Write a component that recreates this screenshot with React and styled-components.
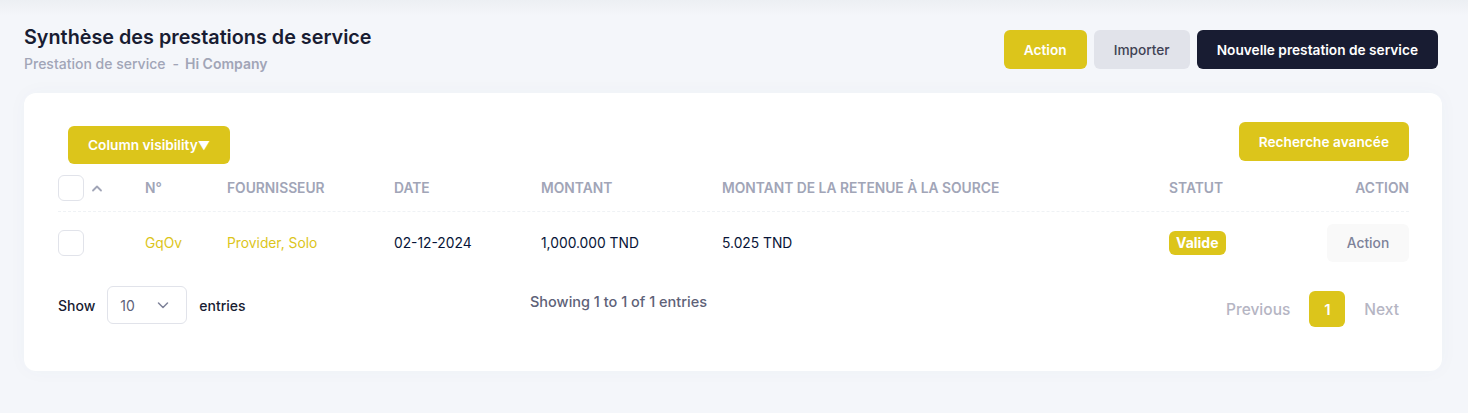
import styled, { createGlobalStyle } from "styled-components";

const yellow = "#dcc51b";

const GlobalStyle = createGlobalStyle`
    body {
        margin: 0;
        font-family: Inter, "Noto Sans", sans-serif;
        background: #f4f6fa;
        color: #181c32;
    }
`;

const columns = "87px 82px 167px 147px 181px 447px 131px 109px";

const App = () => {
    return (
        <Page>
            <GlobalStyle />
            <Header>
                <div>
                    <Title>Synthèse des prestations de service</Title>
                    <Breadcrumb>
                        Prestation de service
                        <Dash>-</Dash>
                        <strong>Hi Company</strong>
                    </Breadcrumb>
                </div>
                <HeaderActions>
                    <Button $variant="yellow">Action</Button>
                    <Button $variant="light">Importer</Button>
                    <Button $variant="dark">Nouvelle prestation de service</Button>
                </HeaderActions>
            </Header>

            <Card>
                <Toolbar>
                    <ColumnButton $variant="yellow">
                        Column visibility<Arrow>▼</Arrow>
                    </ColumnButton>
                    <Button $variant="yellow">Recherche avancée</Button>
                </Toolbar>

                <HeadRow>
                    <CheckCell>
                        <Checkbox />
                        <svg width="12" height="8" viewBox="0 0 12 8">
                            <path d="M2 6.5 L6 2.5 L10 6.5" fill="none" stroke="#a1a5b7" strokeWidth="1.8" strokeLinecap="round" strokeLinejoin="round" />
                        </svg>
                    </CheckCell>
                    <HeadCell>N°</HeadCell>
                    <HeadCell>Fournisseur</HeadCell>
                    <HeadCell>Date</HeadCell>
                    <HeadCell>Montant</HeadCell>
                    <HeadCell>Montant de la retenue à la source</HeadCell>
                    <HeadCell>Statut</HeadCell>
                    <HeadCell $right>Action</HeadCell>
                </HeadRow>

                <BodyRow>
                    <CheckCell>
                        <Checkbox />
                    </CheckCell>
                    <Cell $link>GqOv</Cell>
                    <Cell $link>Provider, Solo</Cell>
                    <Cell>02-12-2024</Cell>
                    <Cell>1,000.000 TND</Cell>
                    <Cell>5.025 TND</Cell>
                    <Cell><Badge>Valide</Badge></Cell>
                    <Cell $right><RowAction>Action</RowAction></Cell>
                </BodyRow>

                <Footer>
                    <Length>
                        Show
                        <Select>
                            10
                            <svg width="14" height="14" viewBox="0 0 14 14">
                                <path d="M2.5 5 L7 9.5 L11.5 5" fill="none" stroke="#7e8299" strokeWidth="1.5" strokeLinecap="round" strokeLinejoin="round" />
                            </svg>
                        </Select>
                        entries
                    </Length>
                    <Info>Showing 1 to 1 of 1 entries</Info>
                    <Pagination>
                        <PageLink>Previous</PageLink>
                        <PageNumber>1</PageNumber>
                        <PageLink>Next</PageLink>
                    </Pagination>
                </Footer>
            </Card>
        </Page>
    );
};

const Page = styled.div`
    min-height: 413px;
    padding: 23px 26px 0 24px;
    box-sizing: border-box;
    background: linear-gradient(to bottom, #eceff3 0px, #f4f6fa 16px, #f4f6fa 100%);
`;

const Header = styled.div`
    display: flex;
    justify-content: space-between;
    align-items: flex-start;
`;

const Title = styled.h1`
    margin: 0;
    font-size: 19.8px;
    line-height: 28px;
    font-weight: 600;
    color: #181c32;
`;

const Breadcrumb = styled.div`
    margin-top: 4px;
    font-size: 14px;
    line-height: 18px;
    font-weight: 500;
    color: #a1a5b7;

    strong {
        font-weight: 600;
    }
`;

const Dash = styled.span`
    margin: 0 6px 0 7px;
`;

const HeaderActions = styled.div`
    display: flex;
    gap: 7px;
    margin-top: 7px;
    margin-right: 4px;
`;

const variants = {
    yellow: { bg: yellow, color: "#ffffff" },
    light: { bg: "#e1e3ea", color: "#3f4254" },
    dark: { bg: "#181c32", color: "#ffffff" },
};

const Button = styled.button`
    height: 39px;
    padding: 0 20px;
    border: none;
    border-radius: 6px;
    font-family: inherit;
    font-size: 13.7px;
    font-weight: ${(p) => (p.$variant === "light" ? 500 : 600)};
    background: ${(p) => variants[p.$variant].bg};
    color: ${(p) => variants[p.$variant].color};
    cursor: pointer;
`;

const Card = styled.div`
    margin-top: 20px;
    background: #ffffff;
    border-radius: 12px;
    box-shadow: 0 0 20px rgba(76, 87, 125, 0.03);
    padding: 29px 33px 44px 34px;
`;

const Toolbar = styled.div`
    display: flex;
    justify-content: space-between;
    align-items: flex-start;
`;

const ColumnButton = styled(Button)`
    height: 38px;
    margin: 4px 0 0 10px;
`;

const Arrow = styled.span`
    font-size: 12px;
`;

const HeadRow = styled.div`
    display: grid;
    grid-template-columns: ${columns};
    align-items: center;
    height: 46px;
    margin-top: 1px;
    border-bottom: 1px dashed #eff2f5;
`;

const BodyRow = styled.div`
    display: grid;
    grid-template-columns: ${columns};
    align-items: center;
    height: 61px;
`;

const CheckCell = styled.div`
    display: flex;
    align-items: center;
    gap: 7px;
`;

const Checkbox = styled.span`
    width: 24px;
    height: 24px;
    border: 1px solid #e1e3ea;
    border-radius: 6px;
    background: #ffffff;
`;

const HeadCell = styled.div`
    font-size: 13.8px;
    font-weight: 600;
    text-transform: uppercase;
    color: #a1a5b7;
    text-align: ${(p) => (p.$right ? "right" : "left")};
    white-space: nowrap;
`;

const Cell = styled.div`
    font-size: 13.8px;
    font-weight: 400;
    color: ${(p) => (p.$link ? yellow : "#071437")};
    text-align: ${(p) => (p.$right ? "right" : "left")};
    white-space: nowrap;
`;

const Badge = styled.span`
    display: inline-block;
    padding: 3px 7px;
    border-radius: 6px;
    background: ${yellow};
    color: #ffffff;
    font-size: 14px;
    font-weight: 700;
    line-height: 18px;
`;

const RowAction = styled.button`
    height: 38px;
    width: 82px;
    border: none;
    border-radius: 6px;
    background: #f9f9f9;
    color: #7e8299;
    font-family: inherit;
    font-size: 13.8px;
    font-weight: 500;
`;

const Footer = styled.div`
    display: grid;
    grid-template-columns: 472px auto 1fr;
    align-items: start;
    margin-top: 13px;
`;

const Length = styled.div`
    display: flex;
    align-items: center;
    gap: 12px;
    font-size: 14px;
    font-weight: 500;
    color: #181c32;
`;

const Select = styled.div`
    display: flex;
    align-items: center;
    justify-content: space-between;
    width: 80px;
    height: 38px;
    box-sizing: border-box;
    padding: 0 16px 0 12px;
    border: 1px solid #e1e3ea;
    border-radius: 6px;
    color: #5e6278;
    font-size: 14px;
    font-weight: 400;
`;

const Info = styled.div`
    margin-top: 7px;
    font-size: 14.5px;
    font-weight: 500;
    color: #5e6278;
`;

const Pagination = styled.div`
    display: flex;
    align-items: center;
    justify-content: flex-end;
    gap: 11px;
    margin-top: 5px;
    margin-right: 2px;
`;

const PageLink = styled.span`
    padding: 0 8px;
    font-size: 15.5px;
    font-weight: 500;
    color: #b5b5c3;
`;

const PageNumber = styled.span`
    display: flex;
    align-items: center;
    justify-content: center;
    width: 36px;
    height: 36px;
    border-radius: 6px;
    background: ${yellow};
    color: #ffffff;
    font-size: 15px;
    font-weight: 600;
`;

export default App;
